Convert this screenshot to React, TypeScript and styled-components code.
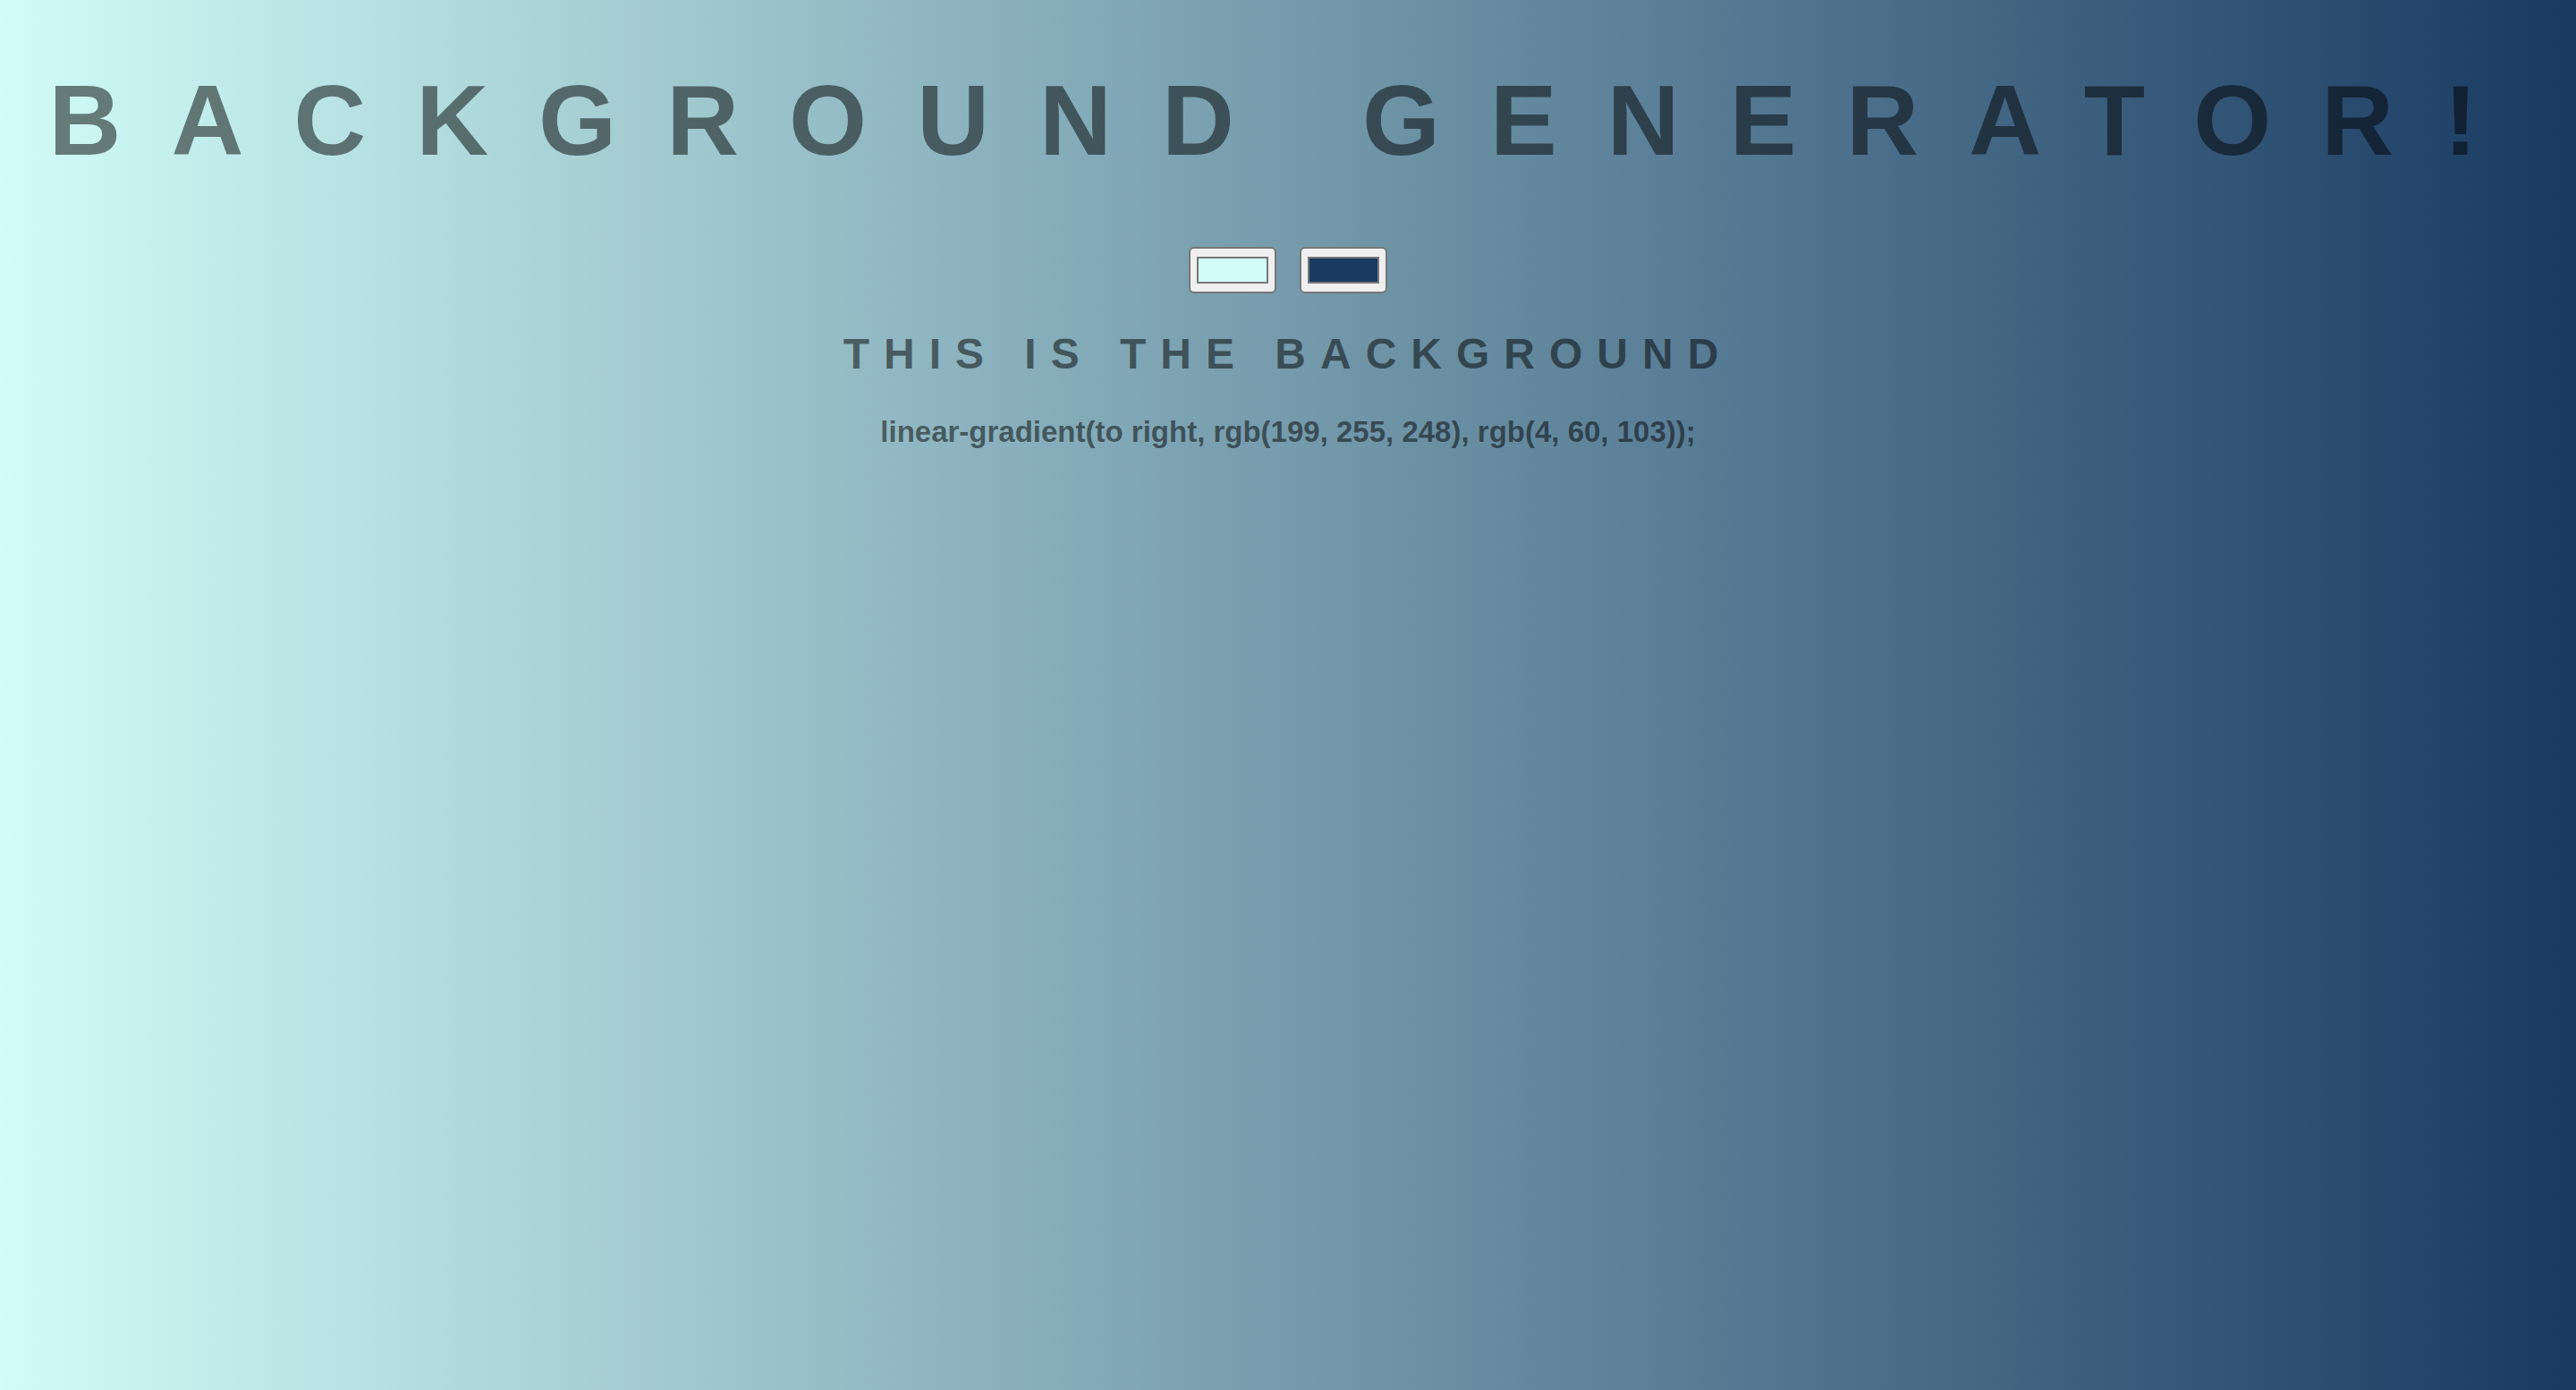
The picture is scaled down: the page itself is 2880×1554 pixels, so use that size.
import React, { useState } from "react";
import styled, { createGlobalStyle } from "styled-components";

const GlobalStyle = createGlobalStyle`
  html, body {
    margin: 0;
    padding: 0;
  }
  body {
    font-family: "Liberation Sans", Arial, Helvetica, sans-serif;
  }
`;

// Full page gradient, colours come from the two pickers
const Page = styled.div<{ $from: string; $to: string }>`
  min-height: 100vh;
  box-sizing: border-box;
  padding-top: 79px;
  display: flex;
  flex-direction: column;
  align-items: center;
  background: linear-gradient(to right, ${(p) => p.$from}, ${(p) => p.$to});
  color: rgba(0, 0, 0, 0.5);
  text-align: center;
`;

const Title = styled.h1`
  margin: 0;
  width: 100%;
  font: 700 112px/112px "Liberation Sans", Arial, Helvetica, sans-serif;
  letter-spacing: 56px;
  text-transform: uppercase;
`;

const Pickers = styled.div`
  display: flex;
  justify-content: center;
  gap: 26px;
  margin-top: 85px;
`;

const ColorInput = styled.input.attrs({ type: "color" })`
  -webkit-appearance: none;
  appearance: none;
  box-sizing: border-box;
  width: 98px;
  height: 52px;
  margin: 0;
  padding: 9px 7px;
  background: #efefef;
  border: 2px solid #777777;
  border-radius: 6px;
  cursor: pointer;

  &::-webkit-color-swatch-wrapper {
    padding: 0;
  }
  &::-webkit-color-swatch {
    border: 2px solid #777777;
    border-radius: 0;
  }
`;

const Subtitle = styled.h3`
  margin: 44px 0 0;
  width: 100%;
  font: 700 48px/48px "Liberation Sans", Arial, Helvetica, sans-serif;
  letter-spacing: 16px;
  text-transform: uppercase;
`;

const Code = styled.h3`
  margin: 46px 0 0;
  font: 700 33px/33px "Liberation Sans", Arial, Helvetica, sans-serif;
  letter-spacing: 0;
`;

export default function App() {
  const [from, setFrom] = useState("#d1fcf7");
  const [to, setTo] = useState("#193a61");
  const [label, setLabel] = useState(
    "linear-gradient(to right, rgb(199, 255, 248), rgb(4, 60, 103));"
  );

  const update = (a: string, b: string) => {
    setFrom(a);
    setTo(b);
    setLabel(`linear-gradient(to right, ${a}, ${b});`);
  };

  return (
    <>
      <GlobalStyle />
      <Page $from={from} $to={to}>
        <Title>Background Generator!</Title>
        <Pickers>
          <ColorInput
            name="color1"
            value={from}
            onChange={(e) => update(e.target.value, to)}
          />
          <ColorInput
            name="color2"
            value={to}
            onChange={(e) => update(from, e.target.value)}
          />
        </Pickers>
        <Subtitle>This is the background</Subtitle>
        <Code>{label}</Code>
      </Page>
    </>
  );
}
